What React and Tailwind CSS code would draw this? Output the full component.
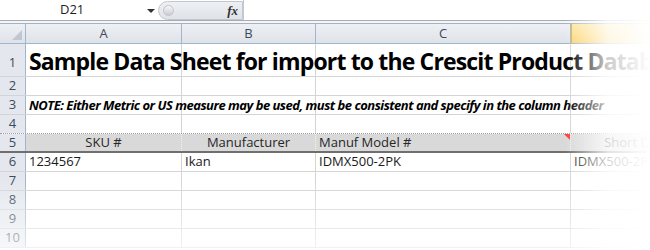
import React from "react";

const font = { fontFamily: '"Open Sans", "Noto Sans", sans-serif' };

const cols = ["A", "B", "C", "D"];

// widths include the right gridline
const colW = ["w-[156px]", "w-[134px]", "w-[255px]", "w-[172px]"];

const RowHead = ({ n, className = "" }) => (
  <div
    className={`w-[26px] shrink-0 border-r border-[#9eb6ce] bg-[#e4e8ee] text-[13px] text-[#3f4a5a] flex items-center justify-center ${className}`}
  >
    {n}
  </div>
);

const Cells = () => (
  <>
    {cols.map((c, i) => (
      <div
        key={c}
        className={`${colW[i]} shrink-0 h-full ${i < 3 ? "border-r border-[#d4d4d4]" : ""}`}
      />
    ))}
  </>
);

const EmptyRow = ({ n }) => (
  <div className="flex h-[19px] border-b border-[#d4d4d4]">
    <RowHead n={n} />
    <Cells />
  </div>
);

export default function App() {
  return (
    <div className="relative w-[650px] h-[250px] overflow-hidden bg-white" style={font}>
      {/* formula bar */}
      <div className="flex h-[21px] border-b border-[#a5acb5] bg-white">
        <div className="w-[158px] flex items-center relative">
          <span className="ml-[60px] text-[13px] text-[#1f1f1f]">D21</span>
          <span className="absolute left-[147px] top-[9px] w-0 h-0 border-l-[4px] border-r-[4px] border-t-[4px] border-l-transparent border-r-transparent border-t-[#333]" />
        </div>
        <div className="w-[85px] mt-[1px] h-[19px] rounded-l-full border border-[#c3c8d0] bg-gradient-to-b from-[#eef0f3] to-[#dfe3e8] flex items-center justify-between pl-[4px] pr-[4px]">
          <span className="w-[11px] h-[11px] rounded-full bg-gradient-to-b from-[#f7f7f7] to-[#c9ccd1] border border-[#c0c4ca]" />
          <span className="italic font-bold text-[13px] text-[#333]" style={{ fontFamily: '"Liberation Serif", serif' }}>
            fx
          </span>
        </div>
        <div className="flex-1 border-l border-[#c3c8d0]" />
      </div>
      <div className="h-[3px] bg-[#f4f6f8] border-b border-[#a9b1bb]" />

      {/* column headers */}
      <div className="flex h-[20px] border-b border-[#9eb6ce] bg-gradient-to-b from-[#edf0f4] to-[#dfe3e8]">
        <div className="w-[26px] shrink-0 border-r border-[#9eb6ce] flex items-end justify-end pr-[3px] pb-[3px]">
          <span className="w-0 h-0 border-l-[10px] border-l-transparent border-b-[10px] border-b-[#c2c7cf]" />
        </div>
        {cols.map((c, i) => (
          <div
            key={c}
            className={`${colW[i]} shrink-0 flex items-center justify-center text-[13px] text-[#3f4a5a] ${
              i < 3 ? "border-r border-[#9eb6ce]" : "bg-gradient-to-b from-[#fde7a0] to-[#fbd36b] border-l border-[#e0b34a]"
            }`}
          >
            {c}
          </div>
        ))}
      </div>

      {/* row 1 */}
      <div className="flex h-[33px] border-b border-[#d4d4d4]">
        <RowHead n="1" className="pt-[6px]" />
        <div className="relative flex h-full">
          <Cells />
          <div className="absolute left-[3px] top-[2px] whitespace-nowrap text-[23px] font-bold text-black tracking-[-0.85px] leading-[30px]">
            Sample Data Sheet for import to the Crescit Product Database
          </div>
        </div>
      </div>

      <EmptyRow n="2" />

      {/* row 3 */}
      <div className="flex h-[19px] border-b border-[#d4d4d4]">
        <RowHead n="3" />
        <div className="relative flex h-full">
          <Cells />
          <div className="absolute left-[3px] top-0 whitespace-nowrap text-[13px] font-bold italic text-black tracking-[-0.5px] leading-[19px]">
            NOTE: Either Metric or US measure may be used, must be consistent and specify in the column header
          </div>
        </div>
      </div>

      <div className="flex h-[19px] border-b border-dotted border-[#a0a0a0]">
        <RowHead n="4" />
        <Cells />
      </div>

      {/* row 5 header */}
      <div className="flex h-[19px] border-b-2 border-[#6f6f6f]">
        <RowHead n="5" />
        {["SKU #", "Manufacturer", "Manuf Model #", "Short Description"].map((t, i) => (
          <div
            key={t}
            className={`${colW[i]} shrink-0 h-full bg-[#d9d9d9] text-[13px] text-[#262626] flex items-center relative whitespace-nowrap ${
              i < 3 ? "border-r border-dotted border-[#f2f2f2]" : ""
            } ${i === 2 ? "pl-[3px]" : "justify-center"}`}
          >
            {t}
            {i === 2 && (
              <span className="absolute right-0 top-0 w-0 h-0 border-l-[6px] border-l-transparent border-t-[6px] border-t-[#ff3b3b]" />
            )}
          </div>
        ))}
      </div>

      {/* row 6 */}
      <div className="flex h-[19px] border-b border-[#d4d4d4]">
        <RowHead n="6" />
        {["1234567", "Ikan", "IDMX500-2PK", "IDMX500-2PK"].map((t, i) => (
          <div
            key={i}
            className={`${colW[i]} shrink-0 h-full pl-[3px] text-[13px] text-[#1a1a1a] flex items-center whitespace-nowrap ${
              i < 3 ? "border-r border-[#d4d4d4]" : ""
            }`}
          >
            {t}
          </div>
        ))}
      </div>

      <EmptyRow n="7" />
      <EmptyRow n="8" />
      <EmptyRow n="9" />
      <EmptyRow n="10" />

      {/* fade overlays over the sheet edges */}
      <div className="pointer-events-none absolute top-0 right-0 h-full w-[85px] bg-gradient-to-r from-white/0 via-white/80 to-white" />
      <div className="pointer-events-none absolute left-0 bottom-0 w-full h-[70px] bg-gradient-to-b from-white/0 to-white/70" />
    </div>
  );
}
